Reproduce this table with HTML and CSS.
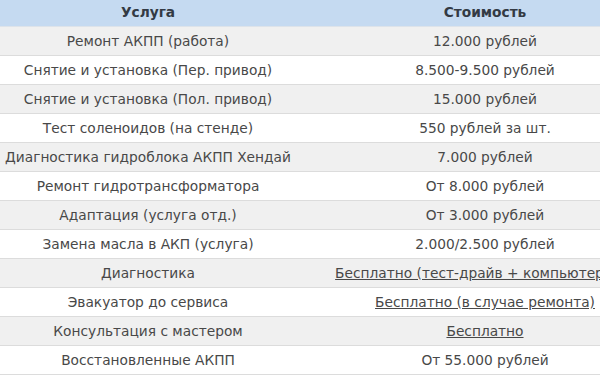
FILE: index.html
```html
<!DOCTYPE html>
<html lang="ru">
<head>
<meta charset="utf-8">
<link rel="stylesheet" href="styles.css">
</head>
<body>
<table class="price">
  <thead>
    <tr><th>Услуга</th><th>Стоимость</th></tr>
  </thead>
  <tbody>
    <tr><td>Ремонт АКПП (работа)</td><td>12.000 рублей</td></tr>
    <tr><td>Снятие и установка (Пер. привод)</td><td>8.500-9.500 рублей</td></tr>
    <tr><td>Снятие и установка (Пол. привод)</td><td>15.000 рублей</td></tr>
    <tr><td>Тест соленоидов (на стенде)</td><td>550 рублей за шт.</td></tr>
    <tr><td>Диагностика гидроблока АКПП Хендай</td><td>7.000 рублей</td></tr>
    <tr><td>Ремонт гидротрансформатора</td><td>От 8.000 рублей</td></tr>
    <tr><td>Адаптация (услуга отд.)</td><td>От 3.000 рублей</td></tr>
    <tr><td>Замена масла в АКП (услуга)</td><td>2.000/2.500 рублей</td></tr>
    <tr><td>Диагностика</td><td><a class="link" href="#">Бесплатно (тест-драйв + компьютерная)</a></td></tr>
    <tr><td>Эвакуатор до сервиса</td><td><a class="link" href="#">Бесплатно (в случае ремонта)</a></td></tr>
    <tr><td>Консультация с мастером</td><td><a class="link" href="#">Бесплатно</a></td></tr>
    <tr><td>Восстановленные АКПП</td><td>От 55.000 рублей</td></tr>
  </tbody>
</table>
</body>
</html>
```
FILE: styles.css
```css
html, body {
  margin: 0;
  padding: 0;
  background: #ffffff;
  overflow: hidden;
}
.price {
  width: 674px;
  border-collapse: separate;
  border-spacing: 0;
  font-family: "DejaVu Sans", Verdana, sans-serif;
  font-size: 13.75px;
  color: #484848;
  table-layout: fixed;
}
.price th:first-child, .price td:first-child {
  width: 296px;
}
.price th {
  background: #c5daf1;
  color: #333a44;
  font-weight: bold;
  height: 23px;
  padding: 0 0 3px;
  text-align: center;
  border-bottom: 1px solid #dde3ea;
}
.price td {
  height: 28px;
  padding: 0;
  text-align: center;
  white-space: nowrap;
  overflow: hidden;
  border-bottom: 1px solid #dcdcdc;
}
.price tbody tr:nth-child(odd) td {
  background: #f0f0f0;
}
.price tbody tr:nth-child(even) td {
  background: #ffffff;
}
.link {
  color: #484848;
  text-decoration: underline;
}
```
